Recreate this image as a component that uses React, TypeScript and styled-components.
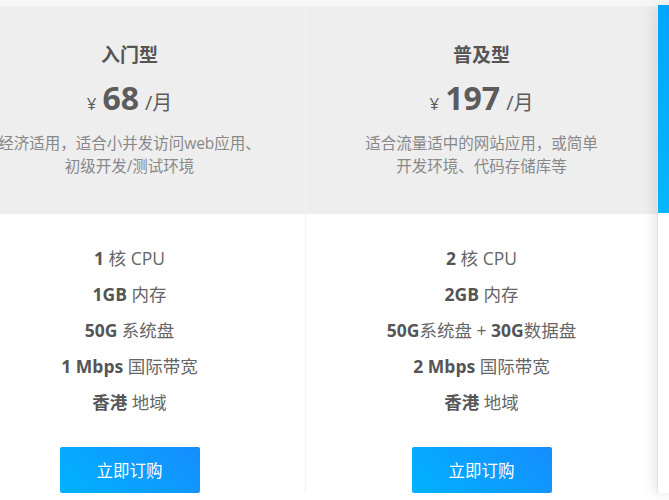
import React from 'react';
import styled, { createGlobalStyle } from 'styled-components';

const GlobalStyle = createGlobalStyle`
  html, body {
    margin: 0;
    padding: 0;
    background: #ffffff;
    overflow: hidden;
  }
  body {
    font-family: 'Open Sans', 'Noto Sans CJK SC', sans-serif;
  }
`;

const Section = styled.div`
  width: 669px;
  height: 500px;
  padding-top: 6px;
  background: linear-gradient(#f7f7f7 0, #f7f7f7 6px, #ffffff 6px);
  box-sizing: border-box;
  overflow: hidden;
`;

const Row = styled.div`
  display: flex;
  margin-left: -46px;
`;

const Card = styled.div<{ $active?: boolean }>`
  flex: 0 0 352px;
  width: 352px;
  box-sizing: border-box;
  border-right: 1px solid #f2f2f2;
  background: #fff;
  position: relative;
  ${(p) =>
    p.$active &&
    `
    margin-top: -1px;
    border-right: none;
    box-shadow: -5px 0 12px rgba(0, 0, 0, 0.09);
    z-index: 1;
  `}
`;

const Header = styled.div<{ $active?: boolean }>`
  height: 208px;
  box-sizing: border-box;
  padding-top: 37px;
  text-align: center;
  background: ${(p) =>
    p.$active ? 'linear-gradient(180deg, #00a6ff 0%, #06b6ff 100%)' : '#eeeeee'};
  color: ${(p) => (p.$active ? '#fff' : '#555')};
`;

const Title = styled.div`
  font-size: 19px;
  line-height: 24px;
  font-weight: 700;
`;

const Price = styled.div`
  margin-top: 11px;
  height: 40px;
  display: flex;
  align-items: baseline;
  justify-content: center;
  gap: 6px;
  color: #5c5c5c;
`;

const Currency = styled.span`
  font-size: 17px;
`;

const Amount = styled.span`
  font-size: 32px;
  font-weight: 700;
  line-height: 40px;
`;

const Unit = styled.span`
  font-size: 20px;
`;

const Desc = styled.div`
  margin-top: 14px;
  font-size: 15.5px;
  line-height: 23px;
  color: #888;
  white-space: nowrap;
`;

const Body = styled.div`
  padding-top: 26px;
  text-align: center;
`;

const Feature = styled.div`
  font-size: 17.5px;
  line-height: 36px;
  color: #666;
  b {
    color: #555;
    font-weight: 700;
  }
`;

const BuyButton = styled.button`
  margin-top: 27px;
  width: 140px;
  height: 46px;
  border: none;
  border-radius: 2px;
  background: linear-gradient(45deg, #00b2ff 0%, #168dff 100%);
  color: #fff;
  font-family: 'Noto Sans CJK SC', sans-serif;
  font-size: 16.5px;
  cursor: pointer;
`;

type Plan = {
  name: string;
  price: string;
  desc: string[];
  features: [string, string, string?, string?][];
  active?: boolean;
};

const plans: Plan[] = [
  {
    name: '入门型',
    price: '68',
    desc: ['经济适用，适合小并发访问web应用、', '初级开发/测试环境'],
    features: [
      ['1', ' 核 CPU'],
      ['1GB', ' 内存'],
      ['50G', ' 系统盘'],
      ['1 Mbps', ' 国际带宽'],
      ['香港', ' 地域'],
    ],
  },
  {
    name: '普及型',
    price: '197',
    desc: ['适合流量适中的网站应用，或简单', '开发环境、代码存储库等'],
    features: [
      ['2', ' 核 CPU'],
      ['2GB', ' 内存'],
      ['50G', '系统盘 + ', '30G', '数据盘'],
      ['2 Mbps', ' 国际带宽'],
      ['香港', ' 地域'],
    ],
  },
  {
    name: '标准型',
    price: '398',
    desc: ['适合中等流量网站应用', '及小型业务系统'],
    features: [
      ['4', ' 核 CPU'],
      ['4GB', ' 内存'],
      ['50G', ' 系统盘'],
      ['3 Mbps', ' 国际带宽'],
      ['香港', ' 地域'],
    ],
    active: true,
  },
];

const App: React.FC = () => {
  return (
    <>
      <GlobalStyle />
      <Section>
        <Row>
          {plans.map((plan) => (
            <Card key={plan.name} $active={plan.active}>
              <Header $active={plan.active}>
                <Title>{plan.name}</Title>
                <Price>
                  <Currency>¥</Currency>
                  <Amount>{plan.price}</Amount>
                  <Unit>/月</Unit>
                </Price>
                <Desc>
                  {plan.desc[0]}
                  <br />
                  {plan.desc[1]}
                </Desc>
              </Header>
              <Body>
                {plan.features.map(([strong, rest, strong2, rest2], i) => (
                  <Feature key={i}>
                    <b>{strong}</b>
                    {rest}
                    {strong2 && <b>{strong2}</b>}
                    {rest2}
                  </Feature>
                ))}
                <BuyButton>立即订购</BuyButton>
              </Body>
            </Card>
          ))}
        </Row>
      </Section>
    </>
  );
};

export default App;
